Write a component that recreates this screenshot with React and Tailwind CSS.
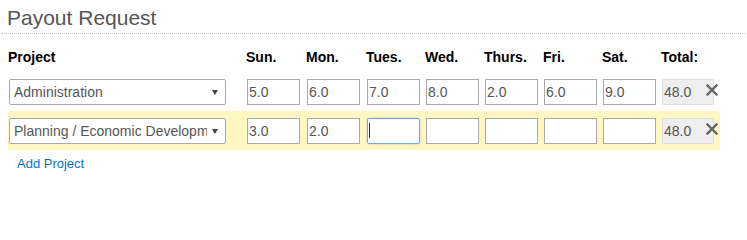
import { useState } from "react";

const days = ["Sun.", "Mon.", "Tues.", "Wed.", "Thurs.", "Fri.", "Sat."];

const cols = "grid grid-cols-[238px_60px_60px_59px_59px_59px_59px_59px_auto] items-center";

function ProjectSelect({ value }) {
  return (
    <div className="flex items-center w-[217px] h-[26px] border border-[#a9a9a9] rounded-[2px] bg-white pl-[4px] pr-[7px] text-[14px] text-[#555]">
      <span className="flex-1 overflow-hidden whitespace-nowrap">{value}</span>
      <svg className="ml-[5px] shrink-0" width="6" height="5" viewBox="0 0 6 5">
        <path d="M0 0h6L3 5z" fill="#444" />
      </svg>
    </div>
  );
}

function HourInput({ value, focused }) {
  return (
    <div className="relative w-[53px] h-[26px]">
      <input
        readOnly
        value={value}
        className={
          focused
            ? "w-full h-full border border-[#7aa5dc] rounded-[2px] shadow-[0_0_2px_#9bbde8] bg-white px-[1px] text-[14px] text-[#555] outline-none"
            : "w-full h-full border border-[#a9a9a9] bg-white px-[1px] text-[14px] text-[#555] outline-none"
        }
      />
      {focused && <span className="absolute left-[2px] top-[5px] w-[1px] h-[15px] bg-[#333]" />}
    </div>
  );
}

function ProjectRow({ project, hours, total, highlight, focusIndex }) {
  return (
    <div className={`${cols} pl-[1px] pt-[7px] pb-[6px] ${highlight ? "bg-[#fff7c2]" : ""}`}>
      <ProjectSelect value={project} />
      {hours.map((h, i) => (
        <HourInput key={i} value={h} focused={i === focusIndex} />
      ))}
      <div className="relative w-[52px] h-[26px]">
        <div className="w-full h-full bg-[#eeeeee] border border-[#dedede] pl-[1px] text-[14px] leading-[24px] text-[#555]">
          {total}
        </div>
        <svg className="absolute left-[44px] top-[5px]" width="12" height="12" viewBox="0 0 12 12">
          <path d="M1.5 1.5l9 9M10.5 1.5l-9 9" stroke="#666" strokeWidth="2.4" strokeLinecap="square" />
        </svg>
      </div>
    </div>
  );
}

export default function App() {
  const [rows] = useState([
    { project: "Administration", hours: ["5.0", "6.0", "7.0", "8.0", "2.0", "6.0", "9.0"], total: "48.0" },
    { project: "Planning / Economic Development", hours: ["3.0", "2.0", "", "", "", "", ""], total: "48.0", highlight: true, focusIndex: 2 },
  ]);

  return (
    <div className="w-[747px] h-[204px] bg-white font-['Liberation_Sans',Arial,sans-serif] overflow-hidden">
      <h2 className="ml-[1px] mr-[2px] pl-[6px] pt-[6px] pb-[3px] text-[21px] leading-[24px] text-[#555] border-b border-dotted border-[#bdbdbd]">
        Payout Request
      </h2>

      <div className={`${cols} ml-[8px] mt-[13px] mb-[5px] h-[20px] text-[14px] leading-[20px] font-bold text-black`}>
        <span>Project</span>
        {days.map((d) => (
          <span key={d}>{d}</span>
        ))}
        <span>Total:</span>
      </div>

      <div className="ml-[8px] w-[712px]">
        {rows.map((r, i) => (
          <ProjectRow key={i} {...r} />
        ))}
      </div>

      <a href="#" className="inline-block ml-[17px] mt-[5px] text-[13px] leading-[18px] text-[#0a72c4]">
        Add Project
      </a>
    </div>
  );
}
